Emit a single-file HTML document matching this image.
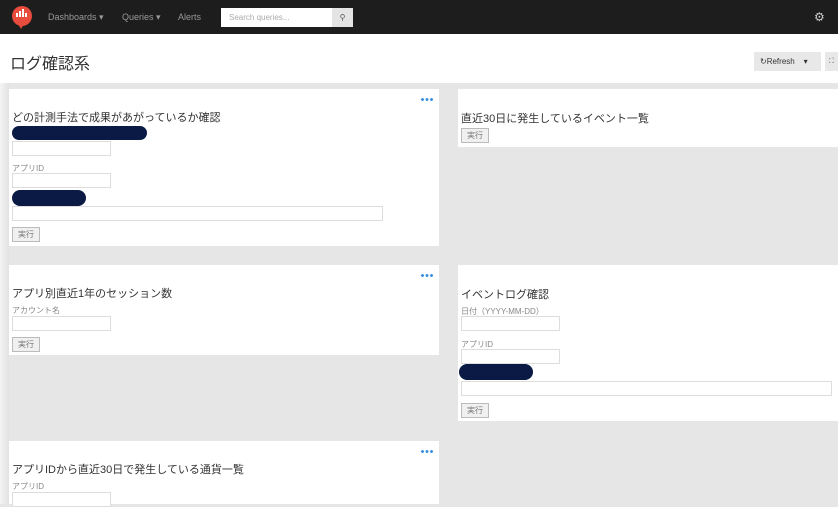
<!DOCTYPE html>
<html><head><meta charset="utf-8"><style>
*{margin:0;padding:0;box-sizing:border-box}
body{width:838px;height:504px;overflow:hidden;background:#e6e6e6;font-family:"Liberation Sans","Noto Sans CJK JP",sans-serif;position:relative;color:#333}
.a{position:absolute}
.nav{left:0;top:0;width:838px;height:34px;background:#1d1d1d}
.nl{color:#9a9a9a;font-size:9px;top:12px}
.hdr{left:0;top:34px;width:838px;height:49px;background:#fff}
.card{position:absolute;background:#fff}
.t{position:absolute;font-size:11px;color:#333}
.l{position:absolute;font-size:8px;color:#888}
.in{position:absolute;border:1px solid #ddd;background:#fff;height:15px}
.pill{position:absolute;background:#0a1a44;border-radius:9px}
.btn{position:absolute;width:28px;height:15px;border:1px solid #bbb;background:#f0f0f0;font-size:8px;color:#777;text-align:center;line-height:13px}
.dots{position:absolute;width:12px;height:3px;background:radial-gradient(circle at 1.5px 1.5px,#3a8fe0 1.3px,transparent 1.6px) 0 0/4.5px 3px repeat-x}
</style></head><body>
<div class="a nav"></div>
<div class="a" style="left:12px;top:6px;width:20px;height:20px;border-radius:50%;background:#e84c3d"></div>
<div class="a" style="left:17px;top:22px;width:0;height:0;border-left:4px solid transparent;border-right:4px solid transparent;border-top:7px solid #e84c3d"></div>
<div class="a" style="left:16px;top:13px;width:2px;height:4px;background:#fff"></div>
<div class="a" style="left:19px;top:11px;width:2px;height:6px;background:#fff"></div>
<div class="a" style="left:22px;top:9px;width:2px;height:8px;background:#fff"></div>
<div class="a" style="left:25px;top:13px;width:2px;height:4px;background:#fff"></div>
<div class="a nl" style="left:48px">Dashboards ▾</div>
<div class="a nl" style="left:122px">Queries ▾</div>
<div class="a nl" style="left:178px">Alerts</div>
<div class="a" style="left:221px;top:8px;width:111px;height:19px;background:#fff;font-size:8px;color:#aaa;padding:5px 8px">Search queries...</div>
<div class="a" style="left:332px;top:8px;width:21px;height:19px;background:#e4e4e4;font-size:8px;color:#555;text-align:center;line-height:19px">&#9906;</div>
<div class="a" style="left:814px;top:10px;color:#ccc;font-size:12px">⚙</div>
<div class="a hdr"></div>
<div class="a" style="left:10px;top:50px;font-size:16px;color:#333">ログ確認系</div>
<div class="a" style="left:754px;top:52px;width:67px;height:19px;background:#e8e8e8;font-size:8px;color:#333;line-height:19px;padding-left:6px">↻Refresh&nbsp;&nbsp;&nbsp;&nbsp;▾</div>
<div class="a" style="left:825px;top:52px;width:13px;height:19px;background:#e8e8e8;font-size:7px;line-height:19px;padding-left:4px;color:#555">⛶</div>
<div class="a" style="left:0;top:83px;width:9px;height:421px;background:linear-gradient(to right,#f4f4f4,#e2e2e2)"></div>

<div class="card" style="left:9px;top:89px;width:430px;height:157px"></div>
<div class="dots" style="left:421px;top:98px"></div>
<div class="t" style="left:12px;top:109px">どの計測手法で成果があがっているか確認</div>
<div class="pill" style="left:12px;top:126px;width:135px;height:14px"></div>
<div class="in" style="left:12px;top:141px;width:99px"></div>
<div class="l" style="left:12px;top:163px">アプリID</div>
<div class="in" style="left:12px;top:173px;width:99px"></div>
<div class="pill" style="left:12px;top:190px;width:74px;height:16px"></div>
<div class="in" style="left:12px;top:206px;width:371px"></div>
<div class="btn" style="left:12px;top:227px">実行</div>

<div class="card" style="left:458px;top:89px;width:380px;height:58px"></div>
<div class="t" style="left:461px;top:110px">直近30日に発生しているイベント一覧</div>
<div class="btn" style="left:461px;top:128px">実行</div>

<div class="card" style="left:9px;top:265px;width:430px;height:90px"></div>
<div class="dots" style="left:421px;top:274px"></div>
<div class="t" style="left:12px;top:285px">アプリ別直近1年のセッション数</div>
<div class="l" style="left:12px;top:305px">アカウント名</div>
<div class="in" style="left:12px;top:316px;width:99px"></div>
<div class="btn" style="left:12px;top:337px">実行</div>

<div class="card" style="left:458px;top:265px;width:380px;height:156px"></div>
<div class="t" style="left:461px;top:286px">イベントログ確認</div>
<div class="l" style="left:461px;top:306px">日付（YYYY-MM-DD）</div>
<div class="in" style="left:461px;top:316px;width:99px"></div>
<div class="l" style="left:461px;top:339px">アプリID</div>
<div class="in" style="left:461px;top:349px;width:99px"></div>
<div class="pill" style="left:459px;top:364px;width:74px;height:16px"></div>
<div class="in" style="left:461px;top:381px;width:371px"></div>
<div class="btn" style="left:461px;top:403px">実行</div>

<div class="card" style="left:9px;top:441px;width:430px;height:63px"></div>
<div class="dots" style="left:421px;top:450px"></div>
<div class="t" style="left:12px;top:461px">アプリIDから直近30日で発生している通貨一覧</div>
<div class="l" style="left:12px;top:481px">アプリID</div>
<div class="in" style="left:12px;top:492px;width:99px"></div>
</body></html>
